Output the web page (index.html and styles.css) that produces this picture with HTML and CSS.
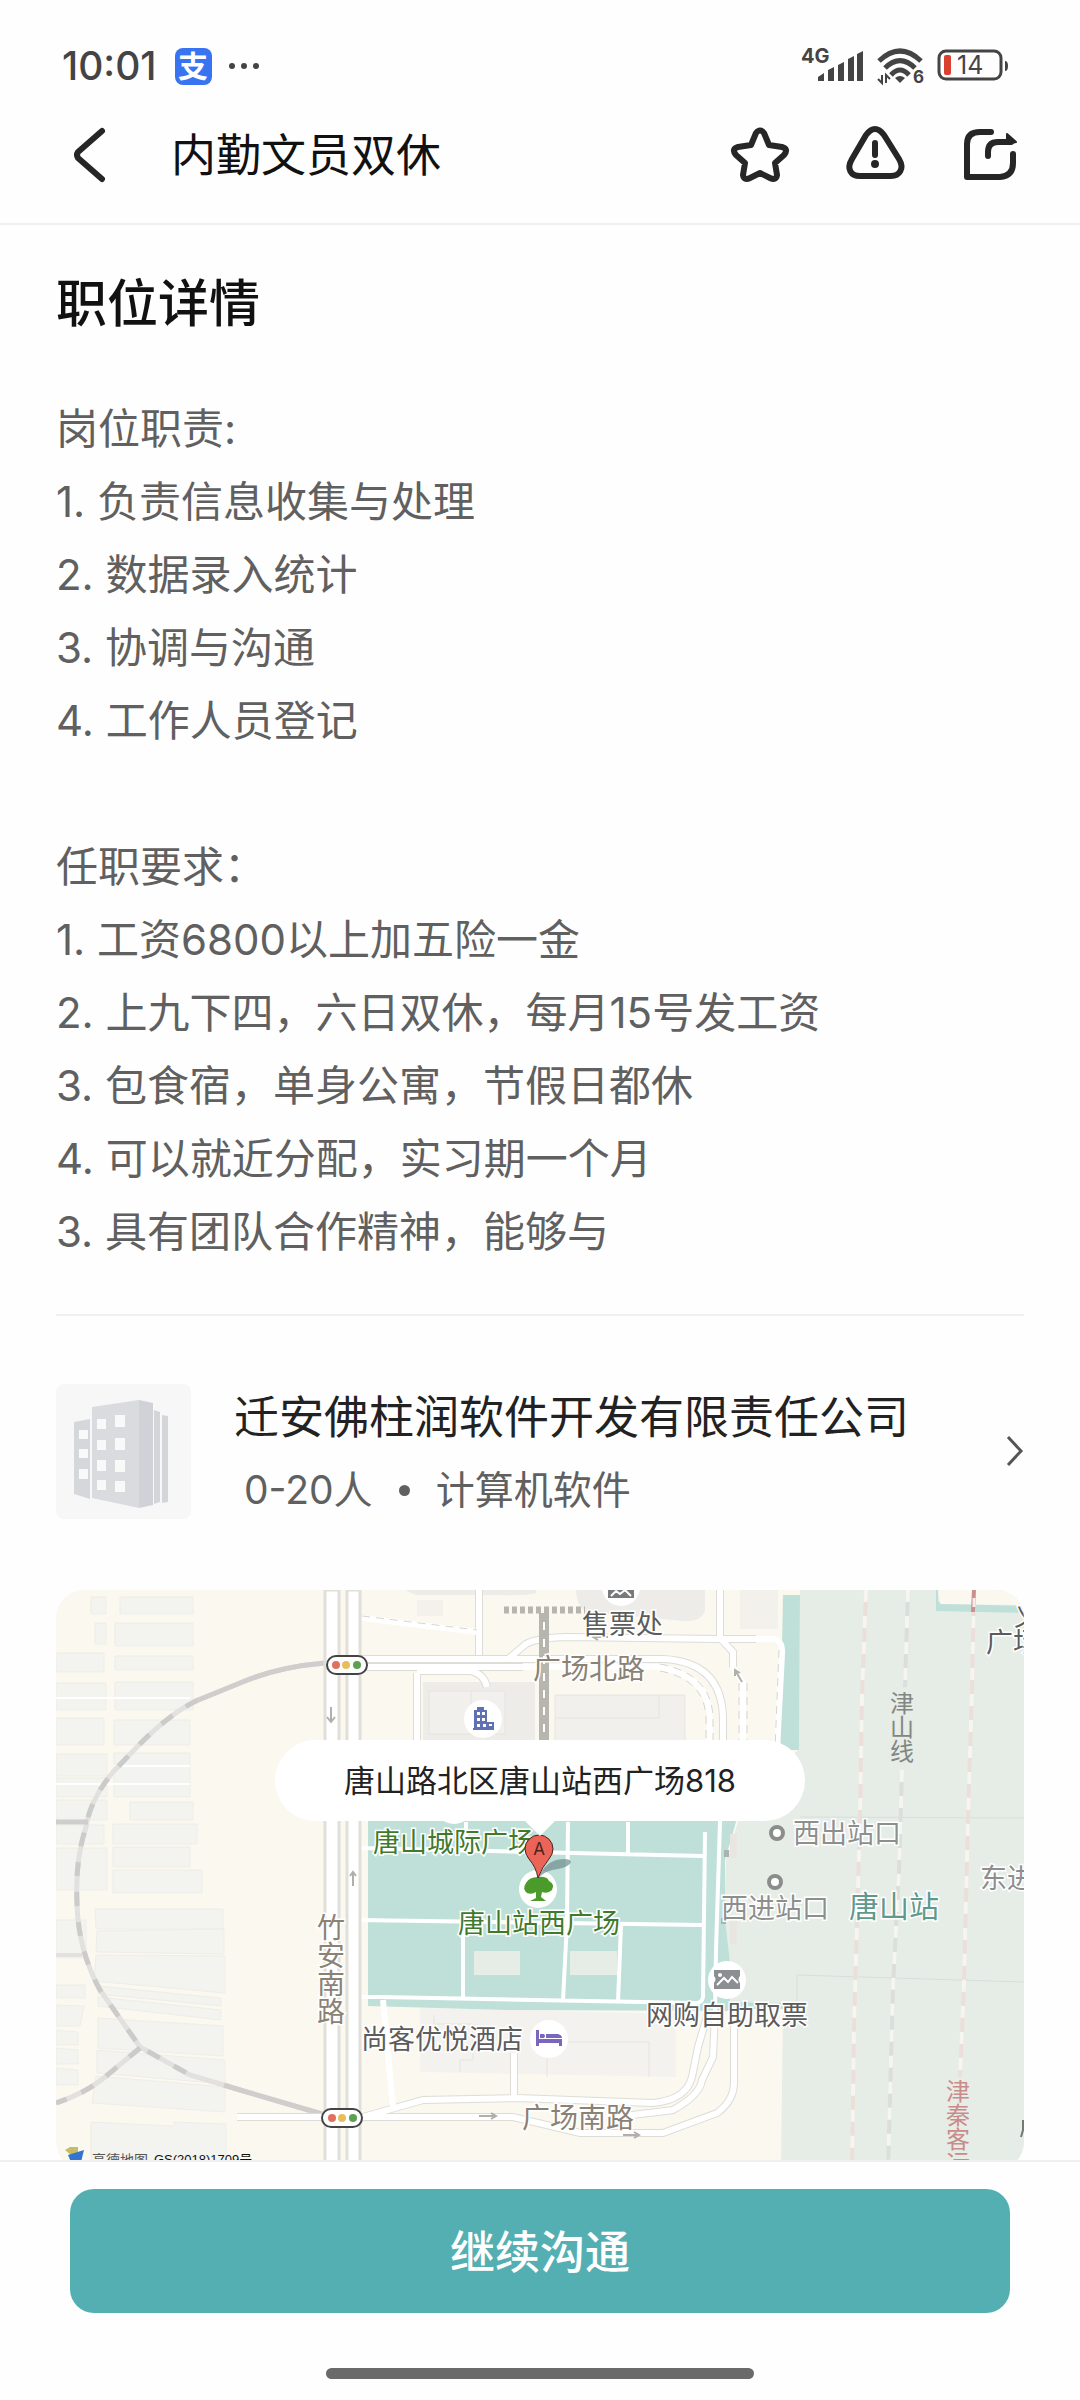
FILE: index.html
```html
<!DOCTYPE html>
<html lang="zh-CN">
<head>
    <meta charset="UTF-8">
    <meta name="viewport" content="width=device-width, initial-scale=1.0">
    <title>内勤文员双休</title>
    <link rel="stylesheet" href="styles.css">
</head>
<body>
    <div class="status-bar">
        <span class="time">10:01</span>
        <span class="pay-badge">支</span>
        <svg class="more-dots" width="32" height="8" viewBox="0 0 32 8" fill="#444">
            <circle cx="4" cy="4" r="3"/><circle cx="16" cy="4" r="3"/><circle cx="28" cy="4" r="3"/>
        </svg>
        <div class="status-right">
            <svg width="63" height="36" viewBox="0 0 63 36" fill="#444">
                <text class="net" x="0" y="15">4G</text>
                <path d="M17 29l6-4v8h-6zM27 22l6-3v14h-6zM37 17l6-3v19h-6zM47 11l6-3v25h-6zM56 6l6-3v30h-6z"/>
            </svg>
            <svg width="47" height="36" viewBox="0 0 47 36" fill="none" stroke="#444" stroke-width="5">
                <path d="M2 13Q23-7 44 13M8 20Q23 5 38 20M14 27Q23 17 32 27"/>
                <path d="M18 30Q23 26 28 30L23 35Z" fill="#444" stroke="none"/>
                <path d="M5 27v8l-4-4M9 35v-8l4 4" stroke-width="2"/>
                <text class="wifi-gen" x="36" y="35">6</text>
            </svg>
            <svg width="72" height="36" viewBox="0 0 72 36">
                <rect x="2" y="3" width="62" height="28" rx="7" fill="none" stroke="#444" stroke-width="3"/>
                <rect x="7" y="7" width="7" height="20" rx="2" fill="#d9402f"/>
                <path d="M68 13q3 0 3 5t-3 5z" fill="#444"/>
                <text class="level" x="20" y="26">14</text>
            </svg>
        </div>
    </div>

    <header class="nav">
        <button class="icon-btn" type="button" aria-label="返回">
            <svg viewBox="0 0 64 64"><path d="M46 8L22 29Q20 32 22 35L46 56"/></svg>
        </button>
        <h1>内勤文员双休</h1>
        <div class="nav-actions">
            <button class="icon-btn" type="button" aria-label="收藏">
                <svg viewBox="0 0 64 64"><path d="M28 10Q32 5 36 10L41 22L54 24Q61 26 56 32L47 40L49 52Q48 58 42 55L32 50L22 55Q16 58 15 52L17 40L8 32Q3 26 10 24L23 22Z"/></svg>
            </button>
            <button class="icon-btn" type="button" aria-label="举报">
                <svg viewBox="0 0 64 64"><path d="M23 12Q32 0 41 12L56 36C62 46 56 53 48 53H17C8 53 3 46 9 36ZM32 20V32"/><circle class="solid" cx="32" cy="41" r="3"/></svg>
            </button>
            <button class="icon-btn" type="button" aria-label="分享">
                <svg viewBox="0 0 64 64"><path d="M33 9H22Q9 9 9 21V54H42Q55 53 55 40V31M30 33V29Q30 19 40 19H53"/><path class="solid" d="M49 11L58 19L49 21Z"/></svg>
            </button>
        </div>
    </header>

    <main>
        <section class="detail">
            <h2>职位详情</h2>
            <p>岗位职责:</p>
            <p>1. 负责信息收集与处理</p>
            <p>2. 数据录入统计</p>
            <p>3. 协调与沟通</p>
            <p>4. 工作人员登记</p>
            <p class="next-group">任职要求：</p>
            <p>1. 工资6800以上加五险一金</p>
            <p>2. 上九下四，六日双休，每月15号发工资</p>
            <p>3. 包食宿，单身公寓，节假日都休</p>
            <p>4. 可以就近分配，实习期一个月</p>
            <p>3. 具有团队合作精神，能够与</p>
        </section>

        <a class="company" href="#company">
            <svg class="company-logo" viewBox="0 0 135 135">
                <rect width="135" height="135" rx="8" fill="#f7f7f8"/>
                <path d="M18 38L34 35V115L18 110Z" fill="#d5d7db"/>
                <path d="M98 26L104 28V118L98 120ZM106 31L112 32V118L106 119Z" fill="#d3d5d9"/>
                <path d="M36 23L83 16V124L36 114Z" fill="#d9dbdf"/>
                <path d="M83 16L97 19V121L83 124Z" fill="#d0d2d7"/>
                <path d="M23 46h9v9h-9zM23 65h9v9h-9zM23 85h9v10h-9zM41 35h9v10h-9zM59 31h10v12h-10zM41 56h9v10h-9zM59 54h10v12h-10zM41 76h9v11h-9zM59 76h10v12h-10zM41 96h9v10h-9zM59 97h10v11h-10z" fill="#f9f9fa"/>
            </svg>
            <div class="company-info">
                <h3>迁安佛柱润软件开发有限责任公司</h3>
                <div class="company-meta"><span>0-20人</span><i class="dot"></i><span>计算机软件</span></div>
            </div>
            <svg class="chevron" width="18" height="32" viewBox="0 0 18 32"><path d="M2 2L15 16L2 30"/></svg>
        </a>

        <div class="map">
            <svg class="map-canvas" viewBox="0 0 968 580" preserveAspectRatio="xMidYMin slice">
                <rect width="968" height="580" fill="#fbf8f0"/>

                <!-- blocks on the left -->
                <g fill="#f3f3ef" stroke="#eeede7">
                    <path d="M35 7h15v17h-15zM64 7h73v17h-73zM39 33h11v21h-11zM59 33h78v23h-78zM0 63h48v19h-48zM59 66h78v14h-78zM0 93h50v27h-50zM59 92h78v28h-78zM0 128h48v27h-48zM58 130h76v25h-76zM0 164h51v22h-51zM58 163h76v44h-76zM0 188h51v19h-51zM0 210h51v20h-51zM74 212h63v18h-63zM0 235h48v19h-48zM57 234h84v20h-84zM0 258h51v42h-51zM57 257h77v20h-77zM57 280h89v23h-89z"/>
                    <path d="M39 319H167V339H40ZM41 341L168 339V364L40 362ZM40 365L169 366V403L38 391ZM42 396L165 408V416L42 404ZM42 407L165 420V430L42 416ZM42 428L167 436V466L42 458ZM41 460L169 470V494L41 483ZM40 486L169 497V522L36 513ZM35 532L118 536V532L170 534V580H35Z"/>
                    <path d="M0 330H30V368H0ZM0 395H29V408H0ZM0 415L28 416L24 436H0ZM0 440L22 442V455H0ZM0 458L22 460V474H0ZM0 478L22 480V495H0Z"/>
                </g>
                <path d="M0 108H134M0 194H134M58 176H134" stroke="#fff" stroke-width="2"/>

                <!-- blocks near the station -->
                <g fill="#edece8">
                    <path d="M349 0H480V3Q470 6 440 5H360ZM520 0H649V20Q646 32 628 31L530 22Q520 14 520 0Z"/>
                    <path d="M361 10h26v16h-26zM684 0h38v39h-38z" fill="#f2f1ec"/>
                    <path d="M367 92h112v70h-112z"/>
                    <path d="M373 101h76v43h-76zM499 105h130v50h-130z" fill="#f1f0ec" stroke="#e6e5e0"/>
                    <path d="M364 418L620 424V487L364 482Z" fill="#f3f2ee"/>
                </g>
                <path d="M415 101V122M499 128H603V105M491 487V452H593V487M378 425V434H417V470H404V482" fill="none" stroke="#e6e5e0"/>

                <!-- station area -->
                <path d="M744 0H968V580H725L727 419L674 412V372L668 330L670 270L682 232L700 190L743 160Z" fill="#e6ece6"/>
                <path d="M312 160H700L680 232L669 270V330L674 372V412L727 413V419H674L671 421L450 420L312 416Z" fill="#bfe0d9"/>
                <path d="M727 5H744L743 160H724Z" fill="#bfe0d9"/>
                <path d="M882 0H968V15L884 14Z" fill="#fbf8f0"/>
                <path d="M880 0H882V11L885 14L968 16V23L880 21Z" fill="#bfe0d9"/>
                <path d="M418 361h46v24h-46zM514 361h47v24h-47z" fill="#e6ece6"/>
                <path d="M744 227L968 228M741 412V385L968 392" fill="none" stroke="#d8dedb"/>
                <path d="M674 244h7v24h-7zM674 330h7v24h-7z" fill="#e9e5e1"/>
                <path d="M668 260h5v7h-5zM665 328h5v6h-5z" fill="#a9b3af"/>

                <!-- railway lines -->
                <g fill="none" stroke-width="4">
                    <path d="M810 0L806 107L804 227L798 437L796 580M918 0L916 100L912 227L908 393L904 487" stroke="#ecdfda"/>
                    <path d="M852 0L849 97M846 180L843 280L837 397L832 580" stroke="#dbdfdb"/>
                    <path d="M810 0L806 107L804 227L798 437L796 580M918 0L916 100L912 227L908 393L904 487M852 0L849 97M846 180L843 280L837 397L832 580" stroke="#f6f5f0" stroke-dasharray="12 14"/>
                    <path d="M918 0L917 22" stroke="#cb8f8d"/>
                    <path d="M918 8V17" stroke="#f6ece8" stroke-width="3"/>
                    <path d="M269 73Q221 77 184 93L142 110Q114 123 81 157L57 182Q34 210 30 237Q19 270 21 313Q22 360 44 400L84 457L134 485L184 500L266 524M84 458L49 487Q30 503 0 513" stroke="#e2e1df" stroke-width="5"/>
                    <path d="M142 110Q114 123 81 157L57 182Q34 210 30 237Q19 270 21 313Q22 360 44 400L84 457L134 485M84 458L49 487Q30 503 0 513" stroke="#cbcbc9" stroke-width="5" stroke-dasharray="14 16"/>
                    <path d="M269 73Q221 77 184 93L140 111M168 495L184 500L266 524M0 232H32" stroke="#cfcecc" stroke-width="5"/>
                    <path d="M0 365H26" stroke="#e2e1df"/>
                </g>

                <!-- roads: casing first, then surface -->
                <g class="casing">
                    <path d="M304 69H607Q667 72 667 130V160M304 77H467"/>
                    <path d="M423 0V65M451 70L470 54Q480 48 511 47L661 49H700M664 0V48L677 62V77M361 83V160M361 81H415Q428 84 431 97"/>
                    <path d="M181 527H457L524 543H607L661 523Q679 510 678 490V433"/>
                    <path d="M307 527L367 510L461 508L597 513Q630 510 636 487L642 457L652 423M560 527L617 520Q644 505 646 490L657 467L659 423M458 463V508"/>
                </g>
                <g class="road">
                    <path d="M304 69H607Q667 72 667 130V160M304 77H467"/>
                    <path d="M423 0V65M451 70L470 54Q480 48 511 47L661 49H700M664 0V48L677 62V77M361 83V160M361 81H415Q428 84 431 97"/>
                    <path d="M181 527H457L524 543H607L661 523Q679 510 678 490V433"/>
                    <path d="M307 527L367 510L461 508L597 513Q630 510 636 487L642 457L652 423M560 527L617 520Q644 505 646 490L657 467L659 423M458 463V508"/>
                    <path d="M306 28L421 42M700 49H719Q727 52 726 64L721 160M677 77L687 93V160M467 77H601Q654 85 654 130V160M327 410L337 517"/>
                </g>
                <path d="M306 26L421 40M604 74Q657 84 657 130V160M604 81Q650 90 650 130V160M723 60L719 160M683 93V160M691 93V160" fill="none" stroke="#d6d5d1" stroke-dasharray="8 6"/>
                <path class="park-road" d="M302 330L646 335M302 258L647 266M410 232V262M512 232L511 333L507 410M572 232V263M407 333V408M565 335L562 412M649 242L647 407Q646 413 640 413L324 407H302M664 200V232L660 360L659 423"/>

                <!-- main road on the left -->
                <path d="M269 0H283V580H269ZM291 0H304V580H291Z" fill="#fff" stroke="#e0dfda" stroke-width="3"/>

                <!-- elevated walkway -->
                <path d="M448 20H529" stroke="#b6b5ae" stroke-width="7" stroke-dasharray="5 3"/>
                <path d="M488 23V160" stroke="#b6b5ae" stroke-width="10"/>
                <path d="M488 32V160" stroke="#fff" stroke-width="2" stroke-dasharray="8 9"/>

                <!-- direction arrows -->
                <g class="arrow">
                    <path d="M275 117V131M271 127L275 132L279 127M297 296V282M294 286L297 282L300 286"/>
                    <path d="M552 47H537M542 44L537 47L542 50M423 526H440M435 523L440 526L435 529M567 545H583M578 542L583 545L578 548M686 92L679 80M679 86V80L684 83"/>
                </g>

                <!-- traffic lights -->
                <g>
                    <rect x="271" y="66" width="40" height="18" rx="9" fill="#fff" stroke="#444" stroke-width="2"/>
                    <circle cx="280" cy="75" r="4" fill="#e0705f"/><circle cx="290" cy="75" r="4" fill="#e6bf5c"/><circle cx="301" cy="75" r="4" fill="#5ea052"/>
                    <rect x="266" y="519" width="40" height="18" rx="9" fill="#fff" stroke="#444" stroke-width="2"/>
                    <circle cx="276" cy="528" r="4" fill="#e0705f"/><circle cx="286" cy="528" r="4" fill="#e6bf5c"/><circle cx="297" cy="528" r="4" fill="#5ea052"/>
                </g>

                <!-- place icons -->
                <g fill="#fff">
                    <circle cx="427" cy="129" r="19"/><circle cx="565" cy="-3" r="19"/><circle cx="493" cy="449" r="19"/><circle cx="482" cy="299" r="19"/><circle cx="671" cy="390" r="19"/><circle cx="398" cy="215" r="19"/>
                </g>
                <path d="M418 120h3v-3h7v3h3v12h7v8h-21v-2h1zM421 122v3h3v-3zM426 122v3h3v-3zM421 128v3h3v-3zM426 128v3h3v-3zM421 134v3h3v-3zM427 134v3h3v-3zM433 134v2h3v-2z" fill="#5f70b5" fill-rule="evenodd"/>
                <path d="M552 0H578V8H552Z" fill="#77797b"/><path d="M555 6L560 1L564 4L569 0L575 6" fill="none" stroke="#fff" stroke-width="2"/>
                <path d="M480 440h3v9h23v7h-3v-3h-20v3h-3zM484 444h4q2 2 0 4h-4zM490 444h12q4 1 4 4h-16z" fill="#7a66bd"/>
                <path d="M658 380H684V386Q681 389 684 393V399H658V393Q661 389 658 386Z" fill="#8c8f92"/>
                <path d="M661 395L668 388L672 392L676 387L682 393" fill="none" stroke="#fff" stroke-width="2"/><circle cx="664" cy="385" r="2" fill="#fff"/>
                <path d="M471 303Q466 299 470 293Q473 287 482 287Q491 286 493 291Q499 294 496 300Q492 304 486 302L485 307L490 311H474L480 308V302Q476 305 471 303Z" fill="#4a9a2c"/>
                <circle class="exit" cx="721" cy="243" r="6"/><circle class="exit" cx="719" cy="292" r="6"/>

                <!-- labels -->
                <g class="label">
                    <text x="526" y="44">售票处</text>
                    <text x="305" y="459">尚客优悦酒店</text>
                    <text x="590" y="435">网购自助取票</text>
                    <text x="930" y="62">广场</text>
                    <text x="958" y="36">义</text>
                </g>
                <g class="label road-name">
                    <text x="477" y="89">广场北路</text>
                    <text x="466" y="538">广场南路</text>
                    <text class="vertical" x="275" y="323">竹安南路</text>
                </g>
                <g class="label park">
                    <text x="317" y="262">唐山城际广场</text>
                    <text x="402" y="343">唐山站西广场</text>
                </g>
                <g class="label gate">
                    <text x="737" y="253">西出站口</text>
                    <text x="665" y="328">西进站口</text>
                    <text x="924" y="298">东进</text>
                </g>
                <text class="label station" x="793" y="327">唐山站</text>
                <text class="label rail vertical" x="846" y="101">津山线</text>
                <text class="label rail fast vertical" x="902" y="489">津秦客运</text>
                <path d="M967 530V540L965 547" fill="none" stroke="#777" stroke-width="2"/>

                <!-- marker -->
                <path d="M482 288Q488 274 500 270Q514 267 515 272Q513 277 502 279Q490 280 482 288Z" fill="#6f8c8e" opacity=".7"/>
                <path d="M482 288Q480 277 473 269Q469 264 469 259A14 14 0 0 1 497 259Q497 264 493 269Q486 277 482 288Z" fill="#ea6558" stroke="#4d2320"/>
                <text class="marker" x="483" y="265">A</text>

                <!-- map provider -->
                <path d="M9 560L14 557H22V562L16 566Z" fill="#c5bd62"/><path d="M12 565L28 560L25 572H15Z" fill="#3473d0"/>
                <text class="provider" x="36" y="575">高德地图</text>
                <text class="licence" x="98" y="574">GS(2018)1709号</text>
            </svg>
            <div class="callout">唐山路北区唐山站西广场818</div>
        </div>
    </main>

    <footer>
        <button class="chat-btn" type="button">继续沟通</button>
        <div class="home-bar"></div>
    </footer>
</body>
</html>
```

FILE: styles.css
```css
* {
    box-sizing: border-box;
}

body {
    display: flex;
    flex-direction: column;
    height: 100vh;
    margin: 0;
    font-family: Inter, 'Noto Sans CJK SC', sans-serif;
    background-color: #fefefe;
    color: #222;
}

h1, h2, h3, p {
    margin: 0;
}

/* status bar */
.status-bar {
    display: flex;
    align-items: center;
    flex-shrink: 0;
    height: 86px;
    padding: 46px 71px 0 62px;
    color: #444;
}

.time {
    font-size: 39px;
    font-weight: 500;
    line-height: 40px;
}

.pay-badge {
    width: 37px;
    height: 37px;
    margin-left: 18px;
    border-radius: 8px;
    background-color: #3874f2;
    color: #fff;
    font-size: 30px;
    font-weight: 700;
    line-height: 36px;
    text-align: center;
}

.more-dots {
    margin-left: 16px;
}

.status-right {
    display: flex;
    gap: 13px;
    margin-left: auto;
}

.status-right svg {
    overflow: visible;
}

.net {
    font-size: 20px;
    font-weight: 700;
}

.wifi-gen {
    font-size: 17px;
    font-weight: 700;
    fill: #444;
    stroke: none;
}

.level {
    font-size: 25px;
    fill: #444;
}

/* navigation */
.nav {
    display: flex;
    align-items: center;
    flex-shrink: 0;
    height: 139px;
    padding: 0 58px 0 56px;
    border-bottom: 2px solid #f0f0f0;
}

.nav h1 {
    margin-left: 51px;
    padding-bottom: 4px;
    font-size: 45px;
    font-weight: 400;
    color: #111;
}

.nav-actions {
    display: flex;
    gap: 51px;
    margin-left: auto;
}

.icon-btn {
    width: 64px;
    height: 64px;
    padding: 0;
    border: none;
    background: none;
    cursor: pointer;
}

.icon-btn svg {
    display: block;
    fill: none;
    stroke: #262626;
    stroke-width: 6;
    stroke-linecap: round;
    stroke-linejoin: round;
}

.icon-btn .solid {
    fill: #262626;
    stroke-width: 2;
}

/* content */
main {
    flex: 1;
    min-height: 0;
    padding: 0 56px;
    overflow: hidden;
}

.detail {
    padding: 43px 0 46px;
    border-bottom: 2px solid #f0f0f0;
}

.detail h2 {
    margin-bottom: 52px;
    font-size: 51px;
    font-weight: 500;
    line-height: 72px;
    color: #111;
}

.detail p {
    font-size: 42px;
    line-height: 73px;
    color: #606060;
}

.detail .next-group {
    margin-top: 73px;
}

.company {
    display: flex;
    align-items: center;
    padding: 63px 0 67px;
    color: inherit;
    text-decoration: none;
}

.company-logo {
    flex-shrink: 0;
    width: 135px;
    height: 135px;
}

.company-info {
    flex: 1;
    margin-left: 43px;
    padding-top: 6px;
}

.company h3 {
    font-size: 45px;
    font-weight: 400;
    line-height: 66px;
}

.company-meta {
    display: flex;
    align-items: center;
    margin-top: 6px;
    padding-left: 10px;
    font-size: 39px;
    line-height: 66px;
    color: #606060;
}

.dot {
    width: 11px;
    height: 11px;
    margin: 0 26px;
    border-radius: 50%;
    background-color: #606060;
}

.chevron {
    fill: none;
    stroke: #555;
    stroke-width: 3;
}

/* map */
.map {
    position: relative;
    border-radius: 28px;
    overflow: hidden;
}

.map-canvas {
    display: block;
    width: 100%;
    height: 580px;
}

.casing path {
    fill: none;
    stroke: #dddcd7;
    stroke-width: 8;
}

.road path {
    fill: none;
    stroke: #fff;
    stroke-width: 6;
}

.park-road {
    fill: none;
    stroke: #fff;
    stroke-width: 4;
}

.arrow path {
    fill: none;
    stroke: #b0afab;
    stroke-width: 2;
}

.exit {
    fill: #fff;
    stroke: #8b8d8c;
    stroke-width: 4;
}

.label {
    font-family: 'Noto Sans CJK SC', sans-serif;
    font-size: 27px;
    fill: #5c5c5c;
    stroke: #fff;
    stroke-width: 3;
    paint-order: stroke;
}

.vertical {
    writing-mode: vertical-rl;
}

.road-name {
    font-size: 28px;
    fill: #8b8276;
}

.park {
    fill: #3f7a2c;
}

.gate {
    fill: #8d8f8e;
}

.station {
    font-size: 30px;
    fill: #5f998d;
}

.rail {
    font-size: 24px;
    fill: #828784;
    stroke: #e6ece6;
}

.fast {
    fill: #c98c8a;
}

.marker {
    font-size: 17px;
    text-anchor: middle;
    fill: #4d2320;
}

.provider {
    font-size: 14px;
    fill: #555;
}

.licence {
    font-family: 'Liberation Sans', 'Noto Sans CJK SC', sans-serif;
    font-size: 13px;
    fill: #111;
}

.callout {
    position: absolute;
    top: 150px;
    left: 50%;
    padding: 0 69px;
    border-radius: 41px;
    background-color: #fff;
    font-size: 31px;
    line-height: 81px;
    white-space: nowrap;
    transform: translateX(-50%);
}

.callout::after {
    content: '';
    position: absolute;
    top: 100%;
    left: 50%;
    margin-left: -15px;
    border: 15px solid transparent;
    border-top-color: #fff;
    border-bottom: none;
}

/* bottom bar */
footer {
    flex-shrink: 0;
    padding: 27px 70px 21px;
    border-top: 2px solid #f0f0f0;
}

.chat-btn {
    display: block;
    width: 100%;
    height: 124px;
    padding: 0 0 4px;
    border: none;
    border-radius: 24px;
    background-color: #54afb2;
    color: #fff;
    font-family: inherit;
    font-size: 45px;
    font-weight: 500;
    cursor: pointer;
}

.home-bar {
    width: 428px;
    height: 11px;
    margin: 55px auto 0;
    border-radius: 6px;
    background-color: #6a6a6a;
}
```
